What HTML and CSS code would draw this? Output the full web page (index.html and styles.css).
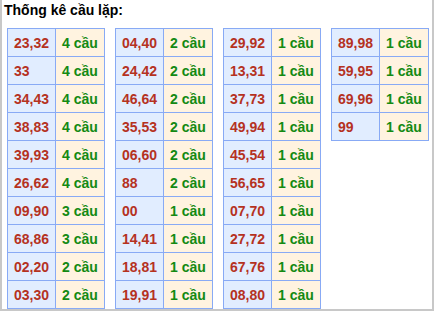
FILE: index.html
```html
<!DOCTYPE html>
<html lang="vi">
<head>
<meta charset="utf-8">
<link rel="stylesheet" href="styles.css">
</head>
<body>
<div class="box">
  <div class="title">Thống kê cầu lặp:</div>
  <div class="tables">
    <table class="tk">
      <tr><td class="num">23,32</td><td class="cnt">4 cầu</td></tr>
      <tr><td class="num">33</td><td class="cnt">4 cầu</td></tr>
      <tr><td class="num">34,43</td><td class="cnt">4 cầu</td></tr>
      <tr><td class="num">38,83</td><td class="cnt">4 cầu</td></tr>
      <tr><td class="num">39,93</td><td class="cnt">4 cầu</td></tr>
      <tr><td class="num">26,62</td><td class="cnt">4 cầu</td></tr>
      <tr><td class="num">09,90</td><td class="cnt">3 cầu</td></tr>
      <tr><td class="num">68,86</td><td class="cnt">3 cầu</td></tr>
      <tr><td class="num">02,20</td><td class="cnt">2 cầu</td></tr>
      <tr><td class="num">03,30</td><td class="cnt">2 cầu</td></tr>
    </table>
    <table class="tk">
      <tr><td class="num">04,40</td><td class="cnt">2 cầu</td></tr>
      <tr><td class="num">24,42</td><td class="cnt">2 cầu</td></tr>
      <tr><td class="num">46,64</td><td class="cnt">2 cầu</td></tr>
      <tr><td class="num">35,53</td><td class="cnt">2 cầu</td></tr>
      <tr><td class="num">06,60</td><td class="cnt">2 cầu</td></tr>
      <tr><td class="num">88</td><td class="cnt">2 cầu</td></tr>
      <tr><td class="num">00</td><td class="cnt">1 cầu</td></tr>
      <tr><td class="num">14,41</td><td class="cnt">1 cầu</td></tr>
      <tr><td class="num">18,81</td><td class="cnt">1 cầu</td></tr>
      <tr><td class="num">19,91</td><td class="cnt">1 cầu</td></tr>
    </table>
    <table class="tk">
      <tr><td class="num">29,92</td><td class="cnt">1 cầu</td></tr>
      <tr><td class="num">13,31</td><td class="cnt">1 cầu</td></tr>
      <tr><td class="num">37,73</td><td class="cnt">1 cầu</td></tr>
      <tr><td class="num">49,94</td><td class="cnt">1 cầu</td></tr>
      <tr><td class="num">45,54</td><td class="cnt">1 cầu</td></tr>
      <tr><td class="num">56,65</td><td class="cnt">1 cầu</td></tr>
      <tr><td class="num">07,70</td><td class="cnt">1 cầu</td></tr>
      <tr><td class="num">27,72</td><td class="cnt">1 cầu</td></tr>
      <tr><td class="num">67,76</td><td class="cnt">1 cầu</td></tr>
      <tr><td class="num">08,80</td><td class="cnt">1 cầu</td></tr>
    </table>
    <table class="tk">
      <tr><td class="num">89,98</td><td class="cnt">1 cầu</td></tr>
      <tr><td class="num">59,95</td><td class="cnt">1 cầu</td></tr>
      <tr><td class="num">69,96</td><td class="cnt">1 cầu</td></tr>
      <tr><td class="num">99</td><td class="cnt">1 cầu</td></tr>
    </table>
  </div>
</div>
</body>
</html>
```

FILE: styles.css
```css
html, body {
  margin: 0;
  padding: 0;
  background: #ffffff;
}
.box {
  box-sizing: border-box;
  width: 434px;
  height: 311px;
  border: 2px solid #c8c8c8;
  border-top: none;
  font-family: "Liberation Sans", Arial, sans-serif;
  overflow: hidden;
}
.title {
  font-size: 14px;
  font-weight: bold;
  color: #000;
  line-height: 18px;
  padding: 1px 0 0 2px;
}
.tables {
  display: flex;
  align-items: flex-start;
  gap: 10px;
  margin-top: 9px;
  padding-left: 5px;
}
.tk {
  border-collapse: separate;
  border-spacing: 0;
  border-top: 1px solid #88aaf5;
  border-left: 1px solid #88aaf5;
  font-size: 14px;
  font-weight: bold;
}
.tk td {
  height: 27px;
  padding: 0 0 0 6px;
  border-right: 1px solid #88aaf5;
  border-bottom: 1px solid #88aaf5;
  vertical-align: middle;
  white-space: nowrap;
  box-sizing: border-box;
}
.tk .num {
  width: 48px;
  height: 28px;
  background: #e1edff;
  color: #b5321f;
}
.tk .cnt {
  width: 49px;
  height: 28px;
  background: #fff3e0;
  color: #138a13;
}
```
